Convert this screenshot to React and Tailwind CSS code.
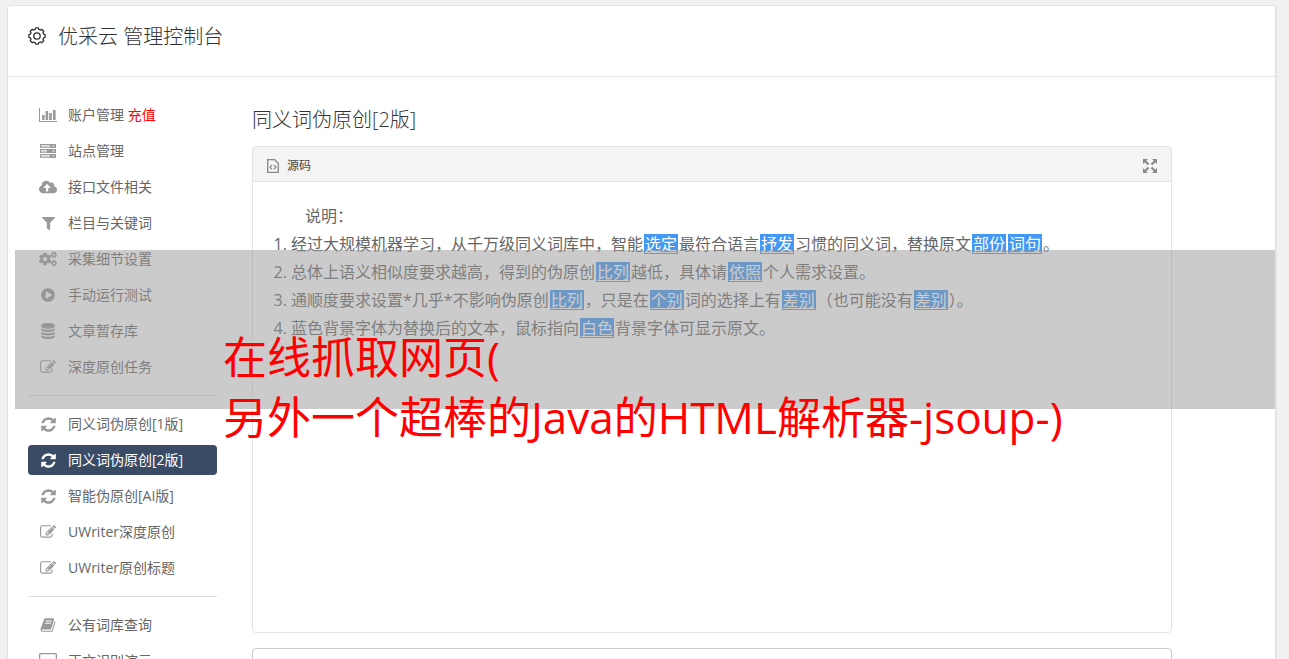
import React from "react";
import { FaCloudUploadAlt, FaFilter, FaCogs } from "react-icons/fa";

const glyph = "h-4 w-4 fill-current";

const BarsIcon = () => (
  <svg viewBox="0 0 20 16" className="h-4 w-5 fill-current">
    <path d="M1 1h1v13h17v1H1zM4 8h2.6v5H4zM7.600 4h2.600v9H7.600zM11.200 6h2.600v7h-2.600zM15 3h2.600v10H15z" />
  </svg>
);

const ServerIcon = () => (
  <svg viewBox="0 0 16 14" className="h-3.5 w-4 fill-current">
    <path
      fillRule="evenodd"
      d="M0 0h16v4H0zM1 1h9v.8H1zM1 2.400h9v.8H1zM12.500 1.500h2v1h-2zM0 5h16v4H0zM1 6h6v.8H1zM1 7.400h6v.8H1zM12.500 6.500h2v1h-2zM0 10h16v4H0zM1 11h9v.8H1zM1 12.400h9v.8H1zM12.500 11.500h2v1h-2z"
    />
  </svg>
);

const PlayIcon = () => (
  <svg viewBox="0 0 1792 1792" className={glyph}>
    <path d="M896 128q209 0 385.5 103t279.5 279.5 103 385.5-103 385.5-279.5 279.5-385.5 103-385.5-103-279.5-279.5-103-385.5 103-385.5 279.5-279.5 385.5-103zm384 823q32-18 32-55t-32-55l-544-320q-31-19-64-1-32 19-32 56v640q0 37 32 56 16 8 32 8 17 0 32-9z" />
  </svg>
);

const DatabaseIcon = () => (
  <svg viewBox="0 0 1792 1792" className={glyph}>
    <path d="M896 768q237 0 443-43t325-127v170q0 69-103 128t-280 93.5-385 34.5-385-34.5-280-93.5-103-128v-170q119 84 325 127t443 43zm0 768q237 0 443-43t325-127v170q0 69-103 128t-280 93.5-385 34.5-385-34.5-280-93.5-103-128v-170q119 84 325 127t443 43zm0-384q237 0 443-43t325-127v170q0 69-103 128t-280 93.5-385 34.5-385-34.5-280-93.5-103-128v-170q119 84 325 127t443 43zm0-1152q208 0 385 34.5t280 93.5 103 128v128q0 69-103 128t-280 93.5-385 34.5-385-34.5-280-93.5-103-128v-128q0-69 103-128t280-93.5 385-34.5z" />
  </svg>
);

const EditIcon = () => (
  <svg viewBox="0 0 1792 1792" className={glyph}>
    <path d="M888 1184l116-116-152-152-116 116v56h96v96h56zm440-720q-16-16-33 1l-350 350q-17 17-1 33t33-1l350-350q17-17 1-33zm80 594v190q0 119-84.5 203.5t-203.5 84.5h-832q-119 0-203.5-84.5t-84.5-203.5v-832q0-119 84.5-203.5t203.5-84.5h832q63 0 117 25 15 7 18 23 3 17-9 29l-49 49q-14 14-32 8-23-6-45-6h-832q-66 0-113 47t-47 113v832q0 66 47 113t113 47h832q66 0 113-47t47-113v-126q0-13 9-22l64-64q15-15 35-7t20 29zm-96-738l288 288-672 672h-288v-288zm444 132l-92 92-288-288 92-92q28-28 68-28t68 28l152 152q28 28 28 68t-28 68z" />
  </svg>
);

const RefreshIcon = () => (
  <svg viewBox="0 0 1536 1792" className="h-[17px] w-[15px] fill-current">
    <path d="M1511 1056q0 5-1 7-64 268-268 434.5t-478 166.5q-146 0-282.5-55t-243.5-157l-129 129q-19 19-45 19t-45-19-19-45v-448q0-26 19-45t45-19h448q26 0 45 19t19 45-19 45l-137 137q71 66 161 102t187 36q134 0 250-65t186-179q11-17 53-117 8-23 30-23h192q13 0 22.5 9.5t9.5 22.5zm25-800v448q0 26-19 45t-45 19h-448q-26 0-45-19t-19-45 19-45l138-138q-148-137-349-137-134 0-250 65t-186 179q-11 17-53 117-8 23-30 23h-199q-13 0-22.5-9.5t-9.5-22.5v-7q65-268 270-434.5t480-166.5q146 0 284 55.5t245 156.5l130-129q19-19 45-19t45 19 19 45z" />
  </svg>
);

const BookIcon = () => (
  <svg viewBox="0 0 1792 1792" className={glyph}>
    <path d="M1703 478q40 57 18 129l-275 906q-19 64-76.5 107.5t-122.5 43.5h-923q-77 0-148.5-53.5t-99.5-131.5q-24-67-2-127 0-4 3-27t4-37q1-8-3-21.5t-3-19.5q2-11 8-21t16.5-23.5 16.5-23.5q23-38 45-91.5t30-91.5q3-10 .5-30t-.5-28q3-11 17-28t17-23q21-36 42-92t25-90q1-9-2.5-32t.5-28q4-13 22-30.5t22-22.5q19-26 42.5-84.5t27.5-96.5q1-8-3-25.5t-2-26.5q2-8 9-18t18-23 17-21q8-12 16.5-30.5t15-35 16-36 19.5-32 26.5-23.5 36-11.5 47.5 5.5l-1 3q38-9 51-9h761q74 0 114 56t18 130l-274 906q-36 119-71.5 153.5t-128.5 34.5h-869q-27 0-38 15-11 16-1 43 24 70 144 70h923q29 0 56-15.5t35-41.5l300-987q7-22 5-57 38 15 59 43zm-1064 2q-4 13 2 22.5t20 9.5h608q13 0 25.5-9.5t16.5-22.5l21-64q4-13-2-22.5t-20-9.5h-608q-13 0-25.5 9.5t-16.5 22.5zm-83 256q-4 13 2 22.5t20 9.5h608q13 0 25.5-9.5t16.5-22.5l21-64q4-13-2-22.5t-20-9.5h-608q-13 0-25.5 9.5t-16.5 22.5z" />
  </svg>
);

const DesktopIcon = () => (
  <svg viewBox="0 0 18 16" className="h-4 w-[18px] fill-current">
    <path fillRule="evenodd" d="M1.5 0h15A1.5 1.5 0 0 1 18 1.5v10a1.5 1.5 0 0 1-1.5 1.5H11v2h1v1H6v-1h1v-2H1.500A1.5 1.5 0 0 1 0 11.500v-10A1.5 1.5 0 0 1 1.5 0zM1.300 1.300v8.700h15.400V1.300z" />
  </svg>
);

// eight rounded teeth around a ring
const gearPoints = Array.from({ length: 8 }, (_, i) =>
  [[-15, 6.9], [-10, 8.2], [10, 8.2], [15, 6.9]].map(([offset, r]) => {
    const a = ((i * 45 + offset) * Math.PI) / 180;
    return `${(9 + r * Math.sin(a)).toFixed(2)},${(9 - r * Math.cos(a)).toFixed(2)}`;
  })
)
  .flat()
  .join(" ");

const GearIcon = () => (
  <svg viewBox="0 0 18 18" className="h-[18px] w-[18px] fill-none stroke-current">
    <polygon points={gearPoints} strokeWidth="1.3" strokeLinejoin="round" />
    <circle cx="9" cy="9" r="3.2" strokeWidth="1.3" />
  </svg>
);

const SourceIcon = () => (
  <svg viewBox="0 0 12 14" className="h-3.5 w-3 fill-none stroke-[#888]">
    <path d="M.7.7h7l3.600 3.600v9H.7z" strokeWidth="1.3" />
    <path d="M5 6 3 8.200 5 10.400M7 6l2 2.200-2 2.200" strokeWidth="1.200" />
  </svg>
);

const ExpandIcon = () => (
  <svg viewBox="0 0 14 14" className="h-3.5 w-3.5 fill-[#888] stroke-[#888]">
    <path stroke="none" d="M0 0h5L0 5zM14 0v5L9 0zM0 14V9l5 5zM14 14H9l5-5z" />
    <path strokeWidth="2" d="M2 2l3.500 3.500M12 2 8.500 5.500M2 12l3.500-3.500M12 12 8.500 8.500" />
  </svg>
);

const menu = [
  [
    { icon: <BarsIcon />, label: "账户管理", extra: "充值" },
    { icon: <ServerIcon />, label: "站点管理" },
    { icon: <FaCloudUploadAlt size={18} />, label: "接口文件相关" },
    { icon: <FaFilter size={13} />, label: "栏目与关键词" },
    { icon: <FaCogs size={18} />, label: "采集细节设置" },
    { icon: <PlayIcon />, label: "手动运行测试" },
    { icon: <DatabaseIcon />, label: "文章暂存库" },
    { icon: <EditIcon />, label: "深度原创任务" },
  ],
  [
    { icon: <RefreshIcon />, label: "同义词伪原创[1版]" },
    { icon: <RefreshIcon />, label: "同义词伪原创[2版]", active: true },
    { icon: <RefreshIcon />, label: "智能伪原创[AI版]" },
    { icon: <EditIcon />, label: "UWriter深度原创" },
    { icon: <EditIcon />, label: "UWriter原创标题" },
  ],
  [
    { icon: <BookIcon />, label: "公有词库查询" },
    { icon: <DesktopIcon />, label: "正文识别演示" },
  ],
];

const Swap = ({ children }) => (
  <span className="mx-px inline-block bg-[#4398f5] px-px leading-5 text-white underline underline-offset-2">
    {children}
  </span>
);

export default function App() {
  return (
    <div className="relative h-screen overflow-y-auto bg-[#f1f1f1] pt-[5px] pr-3 pl-[7px] font-['Open_Sans','Noto_Sans_CJK_SC',sans-serif] text-[#666] [scrollbar-width:none]">
      <div className="min-h-full rounded border border-r-2 border-[#e4e4e4] bg-white">
        {/* Header */}
        <header className="flex h-[71px] items-start gap-3 border-b border-[#e4e4e4] px-5 pt-4 text-[#333]">
          <span className="flex h-7 items-center">
            <GearIcon />
          </span>
          <h1 className="text-xl leading-[30px] font-light">优采云 管理控制台</h1>
        </header>

        <div className="flex items-start gap-[35px] pt-[23px] pr-[103px] pl-5">
          {/* Sidebar */}
          <nav className="w-[189px] shrink-0">
            {menu.map((group, i) => (
              <React.Fragment key={i}>
                {i > 0 && <hr className="my-[13px] border-[#ddd]" />}
                <ul className="space-y-1.5">
                  {group.map((item) => (
                    <li key={item.label}>
                      <a
                        href="#"
                        className={`flex h-[30px] items-center gap-2.5 rounded px-2.5 text-sm ${
                          item.active ? "bg-[#3a4b66] text-white" : "text-[#666]"
                        }`}
                      >
                        <span
                          className={`flex w-5 shrink-0 justify-center ${
                            item.active ? "text-white" : "text-[#999]"
                          }`}
                        >
                          {item.icon}
                        </span>
                        <span>
                          {item.label}
                          {item.extra && <span className="text-[#f00]"> {item.extra}</span>}
                        </span>
                      </a>
                    </li>
                  ))}
                </ul>
              </React.Fragment>
            ))}
          </nav>

          {/* Editor */}
          <main className="min-w-0 flex-1 pt-[5px]">
            <h2 className="text-xl leading-[30px] font-light text-[#333]">同义词伪原创[2版]</h2>

            <section className="mt-[11px] rounded border border-[#e4e4e4]">
              <div className="flex h-[35px] items-center justify-between rounded-t border-b border-[#e4e4e4] bg-[#f4f4f4] px-3.5 pt-[3px]">
                <button className="flex items-center gap-2 text-xs text-[#444]">
                  <SourceIcon />
                  源码
                </button>
                <button aria-label="全屏">
                  <ExpandIcon />
                </button>
              </div>
              <div className="min-h-[450px] px-5 pt-5 text-base leading-7">
                <p className="pl-8">说明：</p>
                <ol className="list-decimal pl-[18px]">
                  <li>
                    经过大规模机器学习，从千万级同义词库中，智能<Swap>选定</Swap>最符合语言<Swap>抒发</Swap>习惯的同义词，替换原文<Swap>部份</Swap><Swap>词句</Swap>。
                  </li>
                  <li>
                    总体上语义相似度要求越高，得到的伪原创<Swap>比列</Swap>越低，具体请<Swap>依照</Swap>个人需求设置。
                  </li>
                  <li>
                    通顺度要求设置*几乎*不影响伪原创<Swap>比列</Swap>，只是在<Swap>个别</Swap>词的选择上有<Swap>差别</Swap>（也可能没有<Swap>差别</Swap>）。
                  </li>
                  <li>
                    蓝色背景字体为替换后的文本，鼠标指向<Swap>白色</Swap>背景字体可显示原文。
                  </li>
                </ol>
              </div>
            </section>

            <section className="mt-[15px] min-h-20 rounded border border-[#ccc]" />
          </main>
        </div>
      </div>

      {/* Caption band over the page */}
      <div className="absolute top-[250px] right-3.5 left-[15px] h-[159px] bg-[#979797]/50" />
      <p className="absolute top-[327px] left-[223px] text-[44px] leading-[60px] whitespace-nowrap text-[#f00]">
        在线抓取网页(
        <br />
        另外一个超棒的Java的HTML解析器-jsoup-)
      </p>
    </div>
  );
}
